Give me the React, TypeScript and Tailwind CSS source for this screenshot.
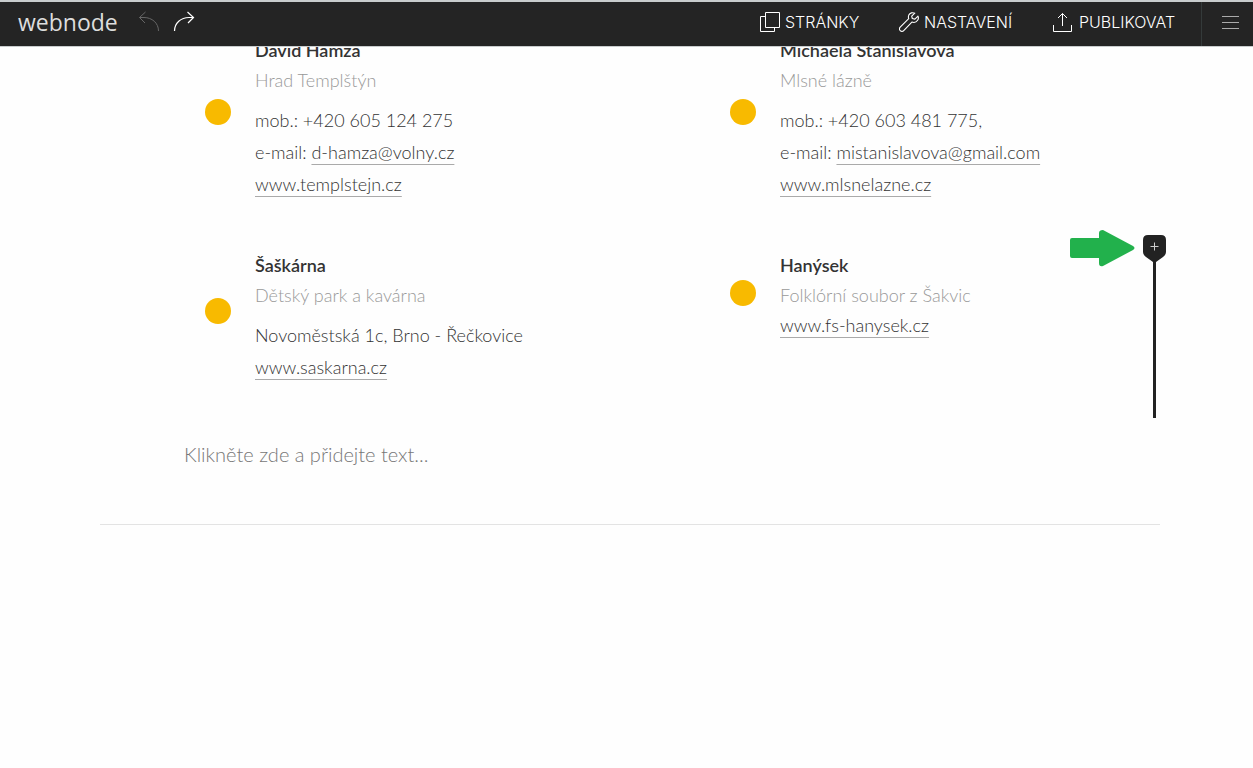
import React from 'react';

interface ContactLine {
  label?: string;
  link?: string;
}

interface Contact {
  name: string;
  subtitle: string;
  lines: ContactLine[];
  compact?: boolean;
}

const contacts: Contact[] = [
  {
    name: 'David Hamza',
    subtitle: 'Hrad Templštýn',
    lines: [
      { label: 'mob.: +420 605 124 275' },
      { label: 'e-mail: ', link: 'd-hamza@volny.cz' },
      { link: 'www.templstejn.cz' },
    ],
  },
  {
    name: 'Michaela Stanislavova',
    subtitle: 'Mlsné lázně',
    lines: [
      { label: 'mob.: +420 603 481 775,' },
      { label: 'e-mail: ', link: 'mistanislavova@gmail.com' },
      { link: 'www.mlsnelazne.cz' },
    ],
  },
  {
    name: 'Šaškárna',
    subtitle: 'Dětský park a kavárna',
    lines: [{ label: 'Novoměstská 1c, Brno - Řečkovice' }, { link: 'www.saskarna.cz' }],
  },
  {
    name: 'Hanýsek',
    subtitle: 'Folklórní soubor z Šakvic',
    lines: [{ link: 'www.fs-hanysek.cz' }],
    compact: true,
  },
];

const UndoIcon = () => (
  <svg width="22" height="22" viewBox="0 0 22 22" fill="none" stroke="currentColor">
    <path d="M7.5 1 1.5 6.5 7 12M1.5 6.5H6C14 6.5 20.5 12 20.5 20" />
  </svg>
);

const RedoIcon = () => (
  <svg width="22" height="22" viewBox="0 0 22 22" fill="none" stroke="currentColor" strokeWidth="1.2">
    <path d="M14.5 1 20.5 6.5 15 12M20.5 6.5H16C8 6.5 1.5 12 1.5 20" />
  </svg>
);

const PagesIcon = () => (
  <svg width="20" height="20" viewBox="0 0 20 20" fill="none" stroke="currentColor">
    <path d="M5.5 .5h14v15h-14zM5.5 4.5h-5v15h14v-4" />
  </svg>
);

const WrenchIcon = () => (
  <svg width="20" height="20" viewBox="0 0 20 20" fill="none" stroke="currentColor" strokeWidth="1.1" strokeLinejoin="round">
    <path d="M15.8 1.2C13.6 .1 10.9 .8 9.8 3.1 9.3 4.3 9.3 5.6 9.7 6.7L1.2 15.2C.3 16.2 .3 17.7 1.2 18.6 2.2 19.6 3.8 19.6 4.7 18.6L12.9 10.1C15 10.8 17.4 10.2 18.6 8.3 19.5 7 19.6 5.5 19 4.1L15.9 7.1 13.3 6.5 12.7 4.2ZM3 16.9v.1" />
  </svg>
);

const PublishIcon = () => (
  <svg width="20" height="20" viewBox="0 0 20 20" fill="none" stroke="currentColor">
    <path d="M.5 13v6.5h18V13M9.5 14V1.5M5 6l4.5-4.5L14 6" />
  </svg>
);

const ContactCard: React.FC<{ contact: Contact }> = ({ contact }) => (
  <section className="flex items-center">
    <div className={contact.compact ? 'pb-1.5' : 'pb-3'}>
      <div className="mr-6 ml-[21px] size-[26px] rounded-full bg-[#f8ba00]" />
    </div>
    <div className="text-[18px] font-light">
      <h2 className="leading-[31px] font-semibold text-[#333]">{contact.name}</h2>
      <p className="leading-7 text-[#999]">{contact.subtitle}</p>
      <div className={contact.compact ? 'pt-0' : 'pt-2.5'}>
        {contact.lines.map((line, index) => (
          <p key={index} className="leading-8 whitespace-pre text-[#333]">
            {line.label}
            {line.link && (
              <a
                href="#"
                className="underline decoration-[#aaa] decoration-1 underline-offset-[5px] [text-decoration-skip-ink:none]"
              >
                {line.link}
              </a>
            )}
          </p>
        ))}
      </div>
    </div>
  </section>
);

export default function App() {
  return (
    <div className="min-h-screen bg-[#fefefe] font-['Lato',sans-serif]">
      <header className="sticky top-0 z-10 flex h-[47px] items-stretch border-t-2 border-b border-[#c8cccd] bg-[#242424] pb-1 font-['Open_Sans',sans-serif] text-white">
        <a href="#" className="ml-[18px] w-[120px] self-center text-[23px] leading-8 text-[#ddd]">
          webnode
        </a>
        <button type="button" aria-label="Zpět" className="text-[#666]">
          <UndoIcon />
        </button>
        <button type="button" aria-label="Vpřed" className="ml-[13px]">
          <RedoIcon />
        </button>
        <nav className="ml-auto flex font-['Inter',sans-serif] text-[16px] font-light">
          <button type="button" className="flex w-[139px] items-center gap-[5px]">
            <PagesIcon />
            STRÁNKY
          </button>
          <button type="button" className="flex w-[154px] items-center gap-[5px]">
            <WrenchIcon />
            NASTAVENÍ
          </button>
          <button type="button" className="flex w-[148px] items-center gap-1.5">
            <PublishIcon />
            PUBLIKOVAT
          </button>
        </nav>
        <button
          type="button"
          aria-label="Menu"
          className="-mb-1 flex w-[52px] flex-col justify-center gap-[5px] border-l border-[#343a3a] pb-1 pl-5"
        >
          <span className="h-px w-[17px] bg-[#aaa]" />
          <span className="h-px w-[17px] bg-[#aaa]" />
          <span className="h-px w-[17px] bg-[#aaa]" />
        </button>
      </header>

      <main className="relative -mt-3 pr-[93px] pl-[100px]">
        <div className="grid grid-cols-2 items-start gap-x-[74px] gap-y-[50px] pl-[84px]">
          {contacts.map((contact) => (
            <ContactCard key={contact.name} contact={contact} />
          ))}
        </div>

        <div className="mt-[55px] border-b border-[#e3e3e3] pb-[54px] pl-[84px]">
          <input
            type="text"
            aria-label="Text"
            placeholder="Klikněte zde a přidejte text..."
            className="block h-8 w-full text-[20px] font-light outline-none placeholder:text-[#777]"
          />
        </div>

        {/* insert handle with the pointing arrow */}
        <div className="absolute top-[195px] right-[87px] flex items-start gap-2">
          <svg width="65" height="37" viewBox="0 0 65 37" fill="#22b14c">
            <path d="M2 8H29V3Q29 0 33 0L63 16Q66 18 63 20L33 36Q29 37 29 33V28H2Q0 28 0 26V10Q0 8 2 8Z" />
          </svg>
          <button type="button" aria-label="Přidat obsah" className="mt-[5px] flex flex-col items-center">
            <svg width="23" height="27" viewBox="0 0 23 27">
              <path d="M5 0H18Q23 0 23 5V17Q23 20 20 22L13 27H10L3 22Q0 20 0 17V5Q0 0 5 0Z" fill="#222" />
              <path d="M7.5 11.5H15.5M11.5 7.5V15.5" stroke="#ccc" />
            </svg>
            <span className="h-[156px] w-[3px] bg-[#222]" />
          </button>
        </div>
      </main>
    </div>
  );
}
